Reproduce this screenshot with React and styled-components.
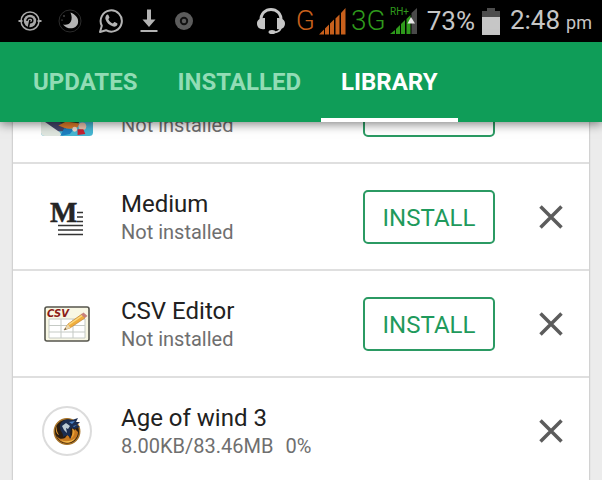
import React, { useState } from 'react';
import styled, { createGlobalStyle } from 'styled-components';

const GlobalStyle = createGlobalStyle`
  * {
    box-sizing: border-box;
  }

  body {
    margin: 0;
    background: #ececec;
    font-family: Roboto, 'Liberation Sans', sans-serif;
    overflow: hidden;
  }
`;

const Screen = styled.div`
  display: flex;
  flex-direction: column;
  height: 100vh;
  overflow: hidden;
`;

const StatusBar = styled.div`
  position: relative;
  z-index: 2;
  flex: none;
  display: flex;
  align-items: center;
  justify-content: space-between;
  height: 42px;
  padding: 0 10px 0 18px;
  background: #000;
  color: #c6c6c6;

  svg {
    display: block;
    flex: none;
  }
`;

const Notifications = styled.div`
  display: flex;
  align-items: center;
  gap: 16px;
`;

const Indicators = styled.div`
  display: flex;
  align-items: center;
  gap: 10px;
`;

const Network = styled.div`
  display: flex;
  align-items: center;
  gap: 5px;
`;

const Signal = styled.div`
  display: flex;
  align-items: center;
  gap: 4px;
  color: ${({ color }) => color};
  font-size: 28px;
  font-weight: 300;
  line-height: 40px;
`;

const Reading = styled.span`
  font-size: 26px;
  line-height: 44px;
`;

const Charge = styled.div`
  display: flex;
  align-items: center;
  gap: 7px;
`;

const Period = styled.small`
  margin-left: 6px;
  font-size: 18px;
`;

const TabBar = styled.nav`
  position: relative;
  z-index: 2;
  flex: none;
  display: flex;
  height: 80px;
  padding-left: 13px;
  background: #0f9d58;
  box-shadow: 0 2px 10px rgba(0, 0, 0, 0.5);
`;

const Tab = styled.button`
  padding: 3px 20px 0;
  border: none;
  border-bottom: 4px solid ${({ $active }) => ($active ? '#fff' : 'transparent')};
  background: none;
  color: ${({ $active }) => ($active ? '#fff' : '#92dcb5')};
  font-family: inherit;
  font-size: 24px;
  font-weight: 700;
  cursor: pointer;
`;

/* the list is scrolled so its first row slides under the tabs */
const AppList = styled.ul`
  flex: none;
  margin: -65px 13px 0;
  padding: 0;
  list-style: none;
  background: #fff;
  box-shadow: 0 0 2px rgba(0, 0, 0, 0.35);
`;

const Row = styled.li`
  display: flex;
  align-items: center;
  height: 107px;
  padding: 0 8px 0 28px;
  border-bottom: 2px solid #dfdfdf;
`;

const IconBox = styled.div`
  flex: none;
  display: flex;
  justify-content: center;
  width: 52px;
  margin-right: 28px;
`;

const Details = styled.div`
  flex: 1;
  min-width: 0;
  padding-top: 2px;
`;

const Name = styled.h2`
  min-height: 28px;
  margin: 0;
  color: #212121;
  font-size: 24px;
  font-weight: 400;
  line-height: 28px;
`;

const Status = styled.p`
  display: flex;
  gap: 12px;
  margin: 0;
  color: #6f6f6f;
  font-size: 20px;
  line-height: 28px;
`;

const InstallButton = styled.button`
  width: 132px;
  height: 54px;
  margin-right: 26px;
  padding: 2px 0 0;
  border: 2px solid #2b9a63;
  border-radius: 5px;
  background: #fff;
  color: #1f9a5c;
  font-family: inherit;
  font-size: 24px;
  cursor: pointer;
`;

const RemoveButton = styled.button`
  display: flex;
  align-items: center;
  justify-content: center;
  width: 60px;
  height: 60px;
  padding: 0;
  border: none;
  background: none;
  color: #5c5c5c;
  cursor: pointer;
`;

const RadarIcon = () => (
  <svg width="24" height="24" viewBox="0 0 24 24" fill="none" stroke="#a8a8a8">
    <circle cx="12" cy="12" r="9" strokeWidth="1.5" />
    <path d="M0.5 12h4M19.5 12h4" strokeWidth="2" />
    <circle cx="12" cy="12" r="6.2" fill="#a8a8a8" stroke="none" />
    <path d="M10.500 18l1.500-7M9 12c-.5-3.500 5.500-4 5.800-1 .2 2.400-2 3.400-3.300 2.400" stroke="#000" strokeWidth="1.500" />
  </svg>
);

const MoonIcon = () => (
  <svg width="24" height="24" viewBox="0 0 24 24">
    <circle cx="12" cy="12" r="11" fill="none" stroke="#2c2c2c" />
    <path d="M12.500 3.500c5 2 8.500 5.500 7.500 10.500-1.200 5.500-9.500 8-15 1.500 6 1.800 11-3.500 7.500-12z" fill="#b4b4b4" />
    <circle cx="6" cy="7" r="0.700" fill="#888" />
    <circle cx="4" cy="11" r="0.600" fill="#888" />
  </svg>
);

const WhatsAppIcon = () => (
  <svg width="26" height="26" viewBox="0 0 26 26">
    <path d="M2 24l1.800-6.200A10.600 10.600 0 1 1 8 22.200z" fill="none" stroke="#b4b4b4" strokeWidth="2" strokeLinejoin="round" />
    <path d="M8.800 6.800c.6-.5 1.300-.5 1.600.2l1 2.300c.3.700-.9 1.500-1 2 .8 2 2.300 3.400 4.400 4.200.6 0 1.200-1.600 1.800-1.400l2.500 1.200c.5.300.4 1 .1 1.600-.8 1.500-2.500 2-4 1.600-4-1.200-6.700-3.900-7.800-7.500-.3-1.600.3-3.200 1.400-4.200z" fill="#b4b4b4" />
  </svg>
);

const DownloadIcon = () => (
  <svg width="18" height="24" viewBox="0 0 18 24" fill="#b4b4b4">
    <path d="M7 0.500h4v10h4.500L9 18 2.500 10.500H7zM0.500 21h17v2h-17z" />
  </svg>
);

const DiscIcon = () => (
  <svg width="20" height="20" viewBox="0 0 20 20">
    <circle cx="10" cy="10" r="9" fill="#5c5c5c" />
    <circle cx="10" cy="10" r="3.200" fill="none" stroke="#111" strokeWidth="2" />
  </svg>
);

const HeadsetIcon = () => (
  <svg width="30" height="28" viewBox="0 0 30 28">
    <path d="M5 14C4 -1.500 26 -1.500 25 14" fill="none" stroke="#c6c6c6" strokeWidth="3" />
    <path d="M9 11v11c-5 1-8-1.500-8-5.500S4.500 11 9 11zM21 11v11c5 1 8-1.500 8-5.500S25.500 11 21 11z" fill="#c6c6c6" />
    <path d="M25 20c-.5 4-4 5.500-8 5.500" fill="none" stroke="#c6c6c6" strokeWidth="2" />
    <ellipse cx="16" cy="25" rx="3.500" ry="2" fill="#c6c6c6" />
  </svg>
);

const SignalBars = () => (
  <svg width="27" height="27" viewBox="0 0 27 27" fill="currentColor">
    <path d="M0 26.500L5 21.500v5zM6 20.500l4-4v10H6zM11 15.500l4-4v15h-4zM16.500 10.500l4-4v20h-4zM22 5l4.500-5v26.500H22z" />
  </svg>
);

const RoamingBars = () => (
  <svg width="27" height="28" viewBox="0 0 27 28" fill="currentColor">
    <path d="M21.500 6l5.500-5v26h-5.500z" fill="#4a4a4a" />
    <path d="M0 27l5-4v4zM6 22l4-4v9H6zM11 17l4-4v14h-4zM16.500 12l4-4v19h-4z" />
    <path d="M17.500 16.500L21 10l4 6.500z" fill="#e8e8e8" />
    <text x="0" y="8" fontSize="10" fontWeight="400">RH+</text>
  </svg>
);

const BatteryIcon = () => (
  <svg width="18" height="27" viewBox="0 0 18 27">
    <path d="M5 0h8v3h5v6H0V3h5z" fill="#4d4d4d" />
    <path d="M0 9h18v18H0z" fill="#c6c6c6" />
  </svg>
);

const CrossIcon = () => (
  <svg width="24" height="24" viewBox="0 0 24 24" stroke="currentColor" strokeWidth="3.500">
    <path d="M1.500 1.500l21 21M22.500 1.500l-21 21" />
  </svg>
);

const GameIcon = () => (
  <svg width="54" height="54" viewBox="0 0 54 54">
    <defs>
      <clipPath id="game">
        <rect width="54" height="54" rx="4" />
      </clipPath>
    </defs>
    <g clipPath="url(#game)">
      <rect width="54" height="54" fill="#46b6d2" />
      <path d="M0 36h10l12 18H0z" fill="#dfe6df" />
      <path d="M2 38l14-2 10 8 0 5-8 0z" fill="#45466a" />
      <path d="M14 36h28l-4 6-12 2z" fill="#2c3d28" />
      <path d="M18 43l8-4 14 2-2 4-10 2z" fill="#df7c2a" />
      <path d="M24 46l10 1-4 5-10 2z" fill="#1d7fc0" />
      <circle cx="43" cy="44" r="4" fill="#eec3ae" />
      <circle cx="35" cy="47" r="2.500" fill="#f0d9cb" />
      <path d="M38 47l6 0 2 5-8 1z" fill="#c52331" />
    </g>
  </svg>
);

const MediumIcon = () => (
  <svg width="52" height="52" viewBox="0 0 52 52">
    <text x="9" y="31" fontFamily="'Liberation Serif', serif" fontSize="29" fontWeight="700" fill="#252525" stroke="#252525" strokeWidth="0.500">M</text>
    <path d="M36 21.500h6M36 26h6M36 30.500h6M17 34.500h25M17 39h25M17 43.500h25" stroke="#333" strokeWidth="1.500" />
  </svg>
);

const CsvIcon = () => (
  <svg width="46" height="36" viewBox="0 0 46 36">
    <rect x="1" y="1" width="44" height="34" rx="2" fill="#f8f7e4" stroke="#55554c" strokeWidth="1.600" />
    <path d="M5 13h36v19H5z" fill="#fff" />
    <path d="M5 13h36v19H5zM5 19.500h36M5 26h36M17 13v19M29 13v19" fill="none" stroke="#c5cac5" />
    <text x="3" y="11" fontFamily="'DejaVu Sans', sans-serif" fontSize="10" fontStyle="italic" fontWeight="700" fill="#8c1b17">CSV</text>
    <path d="M20 24l4-6L38 8l3 4-15 10z" fill="#f0ae3d" stroke="#b97b2a" strokeWidth="0.600" />
    <path d="M25 18.500L39 9" stroke="#fbdc86" strokeWidth="1.500" />
    <path d="M20 24l4-6 2.500 4z" fill="#ead6ac" />
    <path d="M20 24l1.500-2 1 1.200z" fill="#444" />
    <path d="M37 8.500l2.500-2 4 3.500-2.700 2z" fill="#c8817b" />
  </svg>
);

const WindIcon = () => (
  <svg width="50" height="50" viewBox="0 0 50 50">
    <circle cx="25" cy="25" r="24" fill="#fff" stroke="#dcdcdc" strokeWidth="2" />
    <circle cx="25" cy="25.500" r="12.700" fill="#2a1c10" stroke="#a87428" strokeWidth="1.500" />
    <path d="M14 29c3 5 7 4 9 3l3-4 2 5 5-10 3 3c0 6-5 11-11 11-5 0-9-3-11-8z" fill="#c97a20" />
    <path d="M19 34c4 2 10 2 14-2-2 5-11 6-14 2z" fill="#f0bf52" />
    <path d="M30 22c4 2 3 7-1 11 1-4 2-7 1-11zM15 20c-1 3 0 6 2 9-3-1-4-6-2-9z" fill="#eaa033" />
    <path d="M18 19c2-5 7-7 12-5l6-2-2 4 4 0-3 3 3 2-6 2-3-1-1 5 1 5-4-3-4 2c1-4-4-6-3-12z" fill="#1b2d50" />
    <path d="M20 20l4-3 4 3-2 3-2-1 1 5-3-3z" fill="#bccbd5" />
    <path d="M27 16l6-1-3 3zM31 20l4-1-3 2z" fill="#4a83c9" />
  </svg>
);

const apps = [
  { id: 'game', name: '', status: ['Not installed'], Icon: GameIcon, install: true },
  { id: 'medium', name: 'Medium', status: ['Not installed'], Icon: MediumIcon, install: true },
  { id: 'csv', name: 'CSV Editor', status: ['Not installed'], Icon: CsvIcon, install: true },
  { id: 'wind', name: 'Age of wind 3', status: ['8.00KB/83.46MB', '0%'], Icon: WindIcon, install: false },
];

const tabs = ['UPDATES', 'INSTALLED', 'LIBRARY'];

const App = () => {
  const [activeTab, setActiveTab] = useState('LIBRARY');

  return (
    <Screen>
      <GlobalStyle />
      <StatusBar>
        <Notifications>
          <RadarIcon />
          <MoonIcon />
          <WhatsAppIcon />
          <DownloadIcon />
          <DiscIcon />
        </Notifications>
        <Indicators>
          <HeadsetIcon />
          <Network>
            <Signal color="#c8601c">G <SignalBars /></Signal>
            <Signal color="#2f9a1c">3G <RoamingBars /></Signal>
          </Network>
          <Charge>
            <Reading>73%</Reading>
            <BatteryIcon />
          </Charge>
          <Reading>2:48<Period>pm</Period></Reading>
        </Indicators>
      </StatusBar>

      <TabBar>
        {tabs.map((tab) => (
          <Tab key={tab} $active={tab === activeTab} onClick={() => setActiveTab(tab)}>
            {tab}
          </Tab>
        ))}
      </TabBar>

      <AppList>
        {apps.map(({ id, name, status, Icon, install }) => (
          <Row key={id}>
            <IconBox><Icon /></IconBox>
            <Details>
              <Name>{name}</Name>
              <Status>
                {status.map((part) => <span key={part}>{part}</span>)}
              </Status>
            </Details>
            {install && <InstallButton>INSTALL</InstallButton>}
            <RemoveButton aria-label={`Remove ${name}`}><CrossIcon /></RemoveButton>
          </Row>
        ))}
      </AppList>
    </Screen>
  );
};

export default App;
